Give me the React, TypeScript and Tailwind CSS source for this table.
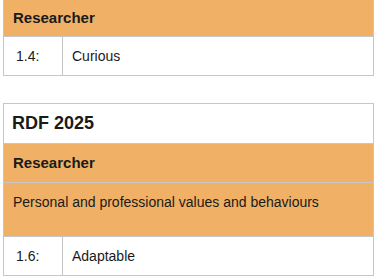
import React from 'react';

const ORANGE = 'bg-[#f0b166]';

const HeadRow = ({ text, tall, short }: { text: string; tall?: boolean; short?: boolean }) => (
  <tr>
    <td
      colSpan={2}
      className={`${ORANGE} border border-[#c6c6c6] px-[9px] ${
        tall
          ? 'h-[54px] align-top pt-[9px] text-[14px]'
          : `${short ? 'h-[37px]' : 'h-[39px]'} align-middle text-[15px] font-bold`
      }`}
    >
      {text}
    </td>
  </tr>
);

const ItemRow = ({ num, label }: { num: string; label: string }) => (
  <tr>
    <td className="w-[59px] h-[39px] border border-[#c6c6c6] pl-[12px] text-[14px]">{num}</td>
    <td className="h-[39px] border border-[#c6c6c6] pl-[9px] text-[14px]">{label}</td>
  </tr>
);

export default function App() {
  return (
    <div className="w-[375px] h-[279px] bg-white overflow-hidden pl-[3px] text-[#1a1a1a] font-['Liberation_Sans',Arial,sans-serif]">
      <table className="w-[371px] border-collapse -mt-[1px]">
        <tbody>
          <HeadRow text="Researcher" short />
          <ItemRow num="1.4:" label="Curious" />
        </tbody>
      </table>

      <table className="w-[371px] border-collapse mt-[27px]">
        <tbody>
          <tr>
            <td colSpan={2} className="h-[40px] border border-[#c6c6c6] px-[8px] text-[18px] font-bold">
              RDF 2025
            </td>
          </tr>
          <HeadRow text="Researcher" />
          <HeadRow text="Personal and professional values and behaviours" tall />
          <ItemRow num="1.6:" label="Adaptable" />
        </tbody>
      </table>
    </div>
  );
}
